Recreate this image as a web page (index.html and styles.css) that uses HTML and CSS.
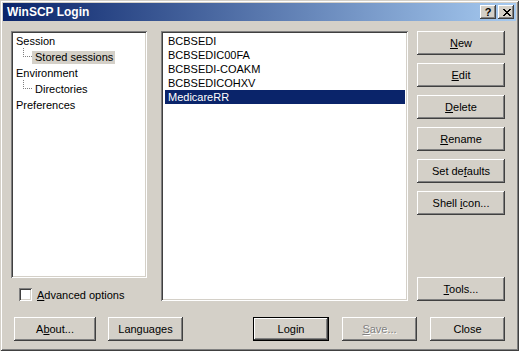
FILE: index.html
```html
<!DOCTYPE html>
<html lang="en">
<head>
  <meta charset="UTF-8" />
  <meta name="viewport" content="width=device-width, initial-scale=1.0"/>
  <title>WinSCP Login</title>
  <link rel="stylesheet" href="styles.css">
</head>
<body>

  <div class="window">
    <div class="titlebar">
      <span class="title">WinSCP Login</span>
      <div class="caption">
        <button class="cap-btn help">?</button>
        <button class="cap-btn close">
          <svg width="8" height="7" viewBox="0 0 8 7"><path d="M0 0h2v1h1v1h2V1h1V0h2v1H7v1H6v1H5v1h1v1h1v1h1v1H6V6H5V5H3v1H2v1H0V6h1V5h1V4h1V3H2V2H1V1H0z" fill="#000"/></svg>
        </button>
      </div>
    </div>

    <div class="content">
      <div class="main">
        <div class="left">
          <ul class="tree sunken">
            <li>Session</li>
            <li class="child"><span class="sel">Stored sessions</span></li>
            <li>Environment</li>
            <li class="child"><span>Directories</span></li>
            <li>Preferences</li>
          </ul>
          <label class="check"><span class="box"></span><span><u>A</u>dvanced options</span></label>
        </div>

        <ul class="sessions sunken">
          <li>BCBSEDI</li>
          <li>BCBSEDIC00FA</li>
          <li>BCBSEDI-COAKM</li>
          <li>BCBSEDICOHXV</li>
          <li class="selected">MedicareRR</li>
        </ul>

        <div class="side">
          <button class="btn"><u>N</u>ew</button>
          <button class="btn"><u>E</u>dit</button>
          <button class="btn"><u>D</u>elete</button>
          <button class="btn"><u>R</u>ename</button>
          <button class="btn">Set de<u>f</u>aults</button>
          <button class="btn">Shell <u>i</u>con...</button>
          <button class="btn tools"><u>T</u>ools...</button>
        </div>
      </div>

      <div class="footer">
        <button class="btn about">A<u>b</u>out...</button>
        <button class="btn languages">Languages</button>
        <button class="btn login">Login</button>
        <button class="btn save" disabled><u>S</u>ave...</button>
        <button class="btn close-btn">Close</button>
      </div>
    </div>
  </div>

</body>
</html>
```

FILE: styles.css
```css
body { margin: 0; font-family: "Liberation Sans", Arial, sans-serif; font-size: 11px; }
ul { list-style: none; margin: 0; padding: 0; }

.window {
  width: 519px;
  height: 351px;
  box-sizing: border-box;
  padding: 3px;
  background: #d4d0c8;
  box-shadow: inset 1px 1px #d4d0c8, inset -1px -1px #404040, inset 2px 2px #fff, inset -2px -2px #808080;
}

.titlebar {
  height: 18px;
  display: flex;
  align-items: center;
  background: linear-gradient(to right, #0a246a, #a6caf0);
  padding: 0 2px 0 4px;
}
.title { color: #fff; font-weight: bold; font-size: 12px; flex: 1; }
.caption { display: flex; gap: 2px; }

.cap-btn, .btn {
  font: inherit;
  color: #000;
  background: #d4d0c8;
  border: 0;
  padding: 0;
  box-shadow: inset -1px -1px #404040, inset 1px 1px #fff, inset -2px -2px #808080, inset 2px 2px #d4d0c8;
}
.cap-btn { width: 16px; height: 14px; display: flex; align-items: center; justify-content: center; }
.help { font-weight: bold; font-size: 11px; line-height: 14px; padding-bottom: 1px; }
.close svg { display: block; margin-left: 1px; }

.sunken {
  box-sizing: border-box;
  background: #fff;
  box-shadow: inset 1px 1px #808080, inset -1px -1px #fff, inset 2px 2px #404040, inset -2px -2px #d4d0c8;
}

.content { padding: 10px 11px 0 8px; }
.main { display: flex; height: 270px; }

.left { width: 136px; display: flex; flex-direction: column; }
.tree { height: 249px; padding: 2px 2px 2px 5px; }
.tree li { height: 16px; line-height: 16px; position: relative; }
.tree .child { padding-left: 16px; }
.tree .child span { display: inline-block; line-height: 13px; padding: 0 2px 0 3px; }
.tree .child::before {
  content: "";
  position: absolute;
  left: 7px;
  top: -1px;
  width: 8px;
  height: 8px;
  border-left: 1px dotted #808080;
  border-bottom: 1px dotted #808080;
}
.tree .sel { background: #d4d0c8; }

.check { display: flex; align-items: center; margin: 10px 0 0 8px; height: 13px; }
.box {
  width: 13px;
  height: 13px;
  box-sizing: border-box;
  background: #fff;
  margin-right: 5px;
  box-shadow: inset 1px 1px #808080, inset -1px -1px #fff, inset 2px 2px #404040, inset -2px -2px #d4d0c8;
}

.sessions { width: 247px; margin-left: 14px; padding: 3px 3px 2px 4px; }
.sessions li { height: 14px; line-height: 14px; padding-left: 3px; }
.sessions .selected { background: #0a246a; color: #fff; }

.side { width: 88px; margin-left: 9px; display: flex; flex-direction: column; gap: 8px; }
.btn { height: 24px; }
.side .btn { width: 88px; }
.side .tools { margin-top: auto; }

.footer { display: flex; margin-top: 16px; padding-left: 3px; }
.about { width: 82px; }
.languages { width: 75px; margin-left: 12px; }
.login {
  width: 76px;
  margin-left: auto;
  box-shadow: inset 0 0 0 1px #000, inset -2px -2px #404040, inset 2px 2px #fff, inset -3px -3px #808080;
}
.save { width: 75px; margin-left: 13px; color: #808080; text-shadow: 1px 1px #fff; }
.close-btn { width: 75px; margin-left: 13px; }
```
